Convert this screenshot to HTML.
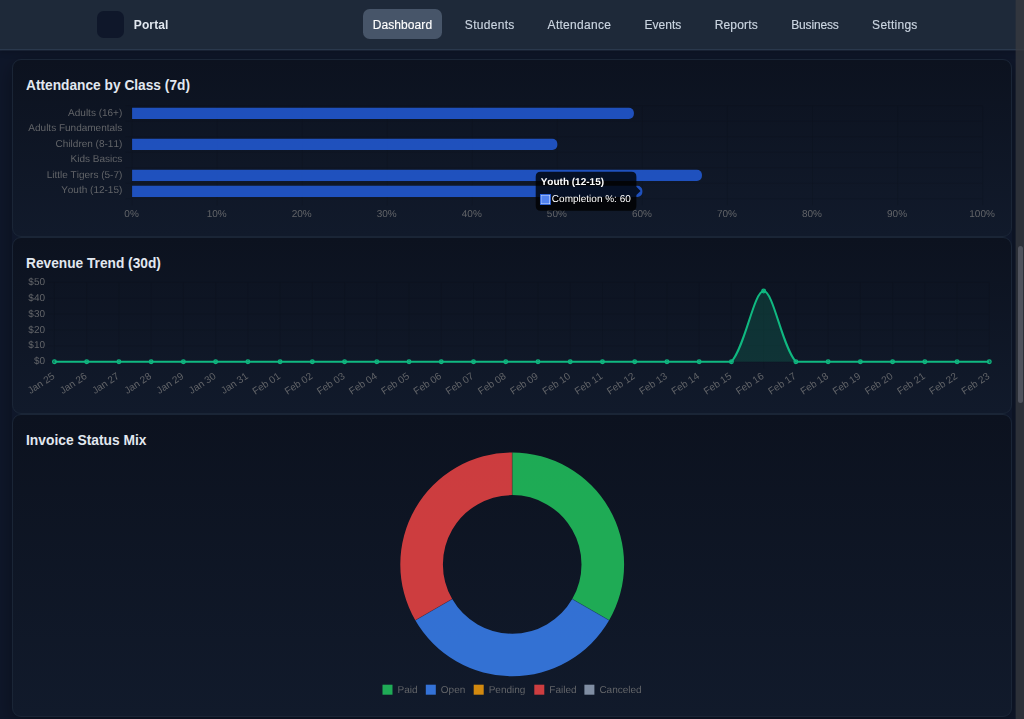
<!DOCTYPE html>
<html lang="en">
<head>
<meta charset="utf-8">
<title>Portal – Dashboard</title>
<style>
*{box-sizing:border-box;margin:0;padding:0}
html,body{width:1024px;height:719px;overflow:hidden;background:#0f172a}
body{position:relative;font-family:"Liberation Sans","DejaVu Sans",sans-serif;color:#e5e7eb}
header{position:absolute;left:0;top:0;width:1024px;height:50px;background:#1e2939;border-bottom:1px solid #2a384c;box-shadow:0 1px 0 rgba(42,56,76,0.4),0 2px 6px rgba(0,0,0,0.22);z-index:2}
.logo{position:absolute;left:97px;top:10.5px;width:27px;height:27px;border-radius:6.7px;background:#0f172a}
.brand{position:absolute;left:133.8px;top:17.5px;font-size:12px;line-height:14px;font-weight:700;color:#e2e8f0;white-space:nowrap;letter-spacing:0.12px}
nav a{position:absolute;top:9px;width:120px;height:30px;line-height:33px;text-align:center;font-size:12px;color:#cbd5e1;white-space:nowrap;text-decoration:none;-webkit-text-stroke:0.15px currentColor}
nav a.on{color:#fff}
nav a.on::before{content:"";position:absolute;left:20.6px;top:0;width:79px;height:30px;border-radius:6.7px;background:#475569;z-index:-1}
nav{position:absolute;left:0;top:0;z-index:0}
.card{position:absolute;left:12px;width:1000px;border:1px solid #1a2536;border-radius:9px;background:linear-gradient(180deg,#0c121f,#111a2b)}
.cards{position:absolute;left:12px;top:59px;width:1000px;height:658px;border-radius:9px;box-shadow:0 6px 20px rgba(0,0,0,0.35)}
.card h3{position:absolute;left:13.1px;top:16px;font-size:15px;line-height:17px;font-weight:700;color:#e2e8f0;white-space:nowrap;transform-origin:0 50%;transform:scaleX(0.915)}
#c1{top:59px;height:178px}
#c2{top:237px;height:177px}
#c3{top:414px;height:303px}
svg.ch{position:absolute;left:0;top:0;width:1024px;height:719px;will-change:transform;text-rendering:geometricPrecision;font-kerning:none;font-family:"Liberation Sans","DejaVu Sans",sans-serif;font-size:10px;fill:#626468}
.sb{position:absolute;right:0;top:0;width:8px;height:719px;background:rgba(58,60,64,0.7);box-shadow:-1px 0 0 rgba(58,60,64,0.25);z-index:3}
.sb i{position:absolute;left:2px;top:246px;width:5px;height:157px;border-radius:2.5px;background:#50535d}
</style>
</head>
<body>
<header>
<div class="logo"></div>
<div class="brand">Portal</div>
<nav><a class="on" style="left:342.45px;letter-spacing:0.1px">Dashboard</a><a style="left:429.75px;letter-spacing:0.3px">Students</a><a style="left:519.39px;letter-spacing:0.28px">Attendance</a><a style="left:602.9px;letter-spacing:0px">Events</a><a style="left:676.35px;letter-spacing:0.2px">Reports</a><a style="left:754.92px;letter-spacing:-0.15px">Business</a><a style="left:834.88px;letter-spacing:0.27px">Settings</a></nav>
</header>
<main>
<div class="cards"></div>
<section class="card" id="c1"><h3>Attendance by Class (7d)</h3></section>
<section class="card" id="c2"><h3 style="transform:scaleX(0.914)">Revenue Trend (30d)</h3></section>
<section class="card" id="c3"><h3 style="transform:scaleX(0.921)">Invoice Status Mix</h3></section>
<svg class="ch" viewBox="0 0 1024 719">
<g id="chart-attendance">
<path d="M132.1 105.7V205.37M217.15 105.7V205.37M302.2 105.7V205.37M387.25 105.7V205.37M472.3 105.7V205.37M557.35 105.7V205.37M642.4 105.7V205.37M727.45 105.7V205.37M812.5 105.7V205.37M897.55 105.7V205.37M982.6 105.7V205.37M125.43 105.7H982.6M125.43 121.2H982.6M125.43 136.7H982.6M125.43 152.2H982.6M125.43 167.7H982.6M125.43 183.2H982.6M125.43 198.7H982.6" fill="none" stroke="#000" stroke-opacity="0.1" stroke-width="0.83"/>
<path d="M132.1 107.87H628.89A5 5 0 0 1 633.89 112.87V114.03A5 5 0 0 1 628.89 119.03H132.1Z" fill="rgba(37,99,235,0.77)"/>
<path d="M132.1 138.87H552.35A5 5 0 0 1 557.35 143.87V145.03A5 5 0 0 1 552.35 150.03H132.1Z" fill="rgba(37,99,235,0.77)"/>
<path d="M132.1 169.87H696.94A5 5 0 0 1 701.94 174.87V176.03A5 5 0 0 1 696.94 181.03H132.1Z" fill="rgba(37,99,235,0.77)"/>
<path d="M132.1 185.87H637.4A5 5 0 0 1 642.4 190.87V192.03A5 5 0 0 1 637.4 197.03H132.1Z" fill="rgba(37,99,235,0.77)"/>
<text x="122.3" y="115.75" text-anchor="end">Adults (16+)</text>
<text x="122.3" y="131.25" text-anchor="end">Adults Fundamentals</text>
<text x="122.3" y="146.75" text-anchor="end">Children (8-11)</text>
<text x="122.3" y="162.25" text-anchor="end">Kids Basics</text>
<text x="122.3" y="177.75" text-anchor="end">Little Tigers (5-7)</text>
<text x="122.3" y="193.25" text-anchor="end">Youth (12-15)</text>
<text x="131.6" y="217.32" text-anchor="middle">0%</text>
<text x="216.65" y="217.32" text-anchor="middle">10%</text>
<text x="301.7" y="217.32" text-anchor="middle">20%</text>
<text x="386.75" y="217.32" text-anchor="middle">30%</text>
<text x="471.8" y="217.32" text-anchor="middle">40%</text>
<text x="556.85" y="217.32" text-anchor="middle">50%</text>
<text x="641.9" y="217.32" text-anchor="middle">60%</text>
<text x="726.95" y="217.32" text-anchor="middle">70%</text>
<text x="812" y="217.32" text-anchor="middle">80%</text>
<text x="897.05" y="217.32" text-anchor="middle">90%</text>
<text x="982.1" y="217.32" text-anchor="middle">100%</text>
<path d="M540.7 171.8H631.4Q636.4 171.8 636.4 176.8V186.78L640.57 190.95L636.4 195.12V205.8Q636.4 210.8 631.4 210.8H540.7Q535.7 210.8 535.7 205.8V176.8Q535.7 171.8 540.7 171.8Z" fill="rgba(0,0,0,0.8)"/>
<text x="540.7" y="185" fill="#fff" font-weight="700">Youth (12-15)</text>
<rect x="540.4" y="194.5" width="10" height="10" fill="#fff" stroke="rgb(37,99,235)" stroke-width="0.83"/>
<rect x="541.23" y="195.33" width="8.33" height="8.33" fill="rgba(37,99,235,0.8)"/>
<text x="551.87" y="202" fill="#fff">Completion %: 60</text>
</g>
<g id="chart-revenue">
<path d="M54.45 282.3V368.42M86.69 282.3V368.42M118.92 282.3V368.42M151.16 282.3V368.42M183.39 282.3V368.42M215.63 282.3V368.42M247.87 282.3V368.42M280.1 282.3V368.42M312.34 282.3V368.42M344.58 282.3V368.42M376.81 282.3V368.42M409.05 282.3V368.42M441.28 282.3V368.42M473.52 282.3V368.42M505.76 282.3V368.42M537.99 282.3V368.42M570.23 282.3V368.42M602.47 282.3V368.42M634.7 282.3V368.42M666.94 282.3V368.42M699.17 282.3V368.42M731.41 282.3V368.42M763.65 282.3V368.42M795.88 282.3V368.42M828.12 282.3V368.42M860.36 282.3V368.42M892.59 282.3V368.42M924.83 282.3V368.42M957.06 282.3V368.42M989.3 282.3V368.42M47.78 361.75H989.3M47.78 345.86H989.3M47.78 329.97H989.3M47.78 314.08H989.3M47.78 298.19H989.3M47.78 282.3H989.3" fill="none" stroke="#000" stroke-opacity="0.1" stroke-width="0.83"/>
<path d="M54.45 361.75H86.69H118.92H151.16H183.39H215.63H247.87H280.1H312.34H344.58H376.81H409.05H441.28H473.52H505.76H537.99H570.23H602.47H634.7H666.94H699.17H731.41C745.08 346.74 753.98 290.96 763.65 290.96C773.32 290.96 782.21 346.74 795.88 361.75H828.12H860.36H892.59H924.83H957.06H989.3V361.75H54.45Z" fill="rgba(16,185,129,0.18)"/>
<path d="M54.45 361.75H86.69H118.92H151.16H183.39H215.63H247.87H280.1H312.34H344.58H376.81H409.05H441.28H473.52H505.76H537.99H570.23H602.47H634.7H666.94H699.17H731.41C745.08 346.74 753.98 290.96 763.65 290.96C773.32 290.96 782.21 346.74 795.88 361.75H828.12H860.36H892.59H924.83H957.06H989.3" fill="none" stroke="#10b981" stroke-width="2" stroke-linejoin="round"/>
<g fill="rgba(16,185,129,0.4)" stroke="#10b981" stroke-width="1.25"><circle cx="54.45" cy="361.75" r="1.85"/><circle cx="86.69" cy="361.75" r="1.85"/><circle cx="118.92" cy="361.75" r="1.85"/><circle cx="151.16" cy="361.75" r="1.85"/><circle cx="183.39" cy="361.75" r="1.85"/><circle cx="215.63" cy="361.75" r="1.85"/><circle cx="247.87" cy="361.75" r="1.85"/><circle cx="280.1" cy="361.75" r="1.85"/><circle cx="312.34" cy="361.75" r="1.85"/><circle cx="344.58" cy="361.75" r="1.85"/><circle cx="376.81" cy="361.75" r="1.85"/><circle cx="409.05" cy="361.75" r="1.85"/><circle cx="441.28" cy="361.75" r="1.85"/><circle cx="473.52" cy="361.75" r="1.85"/><circle cx="505.76" cy="361.75" r="1.85"/><circle cx="537.99" cy="361.75" r="1.85"/><circle cx="570.23" cy="361.75" r="1.85"/><circle cx="602.47" cy="361.75" r="1.85"/><circle cx="634.7" cy="361.75" r="1.85"/><circle cx="666.94" cy="361.75" r="1.85"/><circle cx="699.17" cy="361.75" r="1.85"/><circle cx="731.41" cy="361.75" r="1.85"/><circle cx="763.65" cy="290.96" r="1.85"/><circle cx="795.88" cy="361.75" r="1.85"/><circle cx="828.12" cy="361.75" r="1.85"/><circle cx="860.36" cy="361.75" r="1.85"/><circle cx="892.59" cy="361.75" r="1.85"/><circle cx="924.83" cy="361.75" r="1.85"/><circle cx="957.06" cy="361.75" r="1.85"/><circle cx="989.3" cy="361.75" r="1.85"/></g>
<text x="45.05" y="364.35" text-anchor="end">$0</text>
<text x="45.05" y="348.46" text-anchor="end">$10</text>
<text x="45.05" y="332.57" text-anchor="end">$20</text>
<text x="45.05" y="316.68" text-anchor="end">$30</text>
<text x="45.05" y="300.79" text-anchor="end">$40</text>
<text x="45.05" y="284.9" text-anchor="end">$50</text>
<text transform="translate(50.42 370.22) rotate(-33.7)" x="0" y="9" text-anchor="end">Jan 25</text>
<text transform="translate(82.66 370.22) rotate(-33.7)" x="0" y="9" text-anchor="end">Jan 26</text>
<text transform="translate(114.89 370.22) rotate(-33.7)" x="0" y="9" text-anchor="end">Jan 27</text>
<text transform="translate(147.13 370.22) rotate(-33.7)" x="0" y="9" text-anchor="end">Jan 28</text>
<text transform="translate(179.36 370.22) rotate(-33.7)" x="0" y="9" text-anchor="end">Jan 29</text>
<text transform="translate(211.6 370.22) rotate(-33.7)" x="0" y="9" text-anchor="end">Jan 30</text>
<text transform="translate(243.84 370.22) rotate(-33.7)" x="0" y="9" text-anchor="end">Jan 31</text>
<text transform="translate(276.07 370.22) rotate(-33.7)" x="0" y="9" text-anchor="end">Feb 01</text>
<text transform="translate(308.31 370.22) rotate(-33.7)" x="0" y="9" text-anchor="end">Feb 02</text>
<text transform="translate(340.55 370.22) rotate(-33.7)" x="0" y="9" text-anchor="end">Feb 03</text>
<text transform="translate(372.78 370.22) rotate(-33.7)" x="0" y="9" text-anchor="end">Feb 04</text>
<text transform="translate(405.02 370.22) rotate(-33.7)" x="0" y="9" text-anchor="end">Feb 05</text>
<text transform="translate(437.25 370.22) rotate(-33.7)" x="0" y="9" text-anchor="end">Feb 06</text>
<text transform="translate(469.49 370.22) rotate(-33.7)" x="0" y="9" text-anchor="end">Feb 07</text>
<text transform="translate(501.73 370.22) rotate(-33.7)" x="0" y="9" text-anchor="end">Feb 08</text>
<text transform="translate(533.96 370.22) rotate(-33.7)" x="0" y="9" text-anchor="end">Feb 09</text>
<text transform="translate(566.2 370.22) rotate(-33.7)" x="0" y="9" text-anchor="end">Feb 10</text>
<text transform="translate(598.44 370.22) rotate(-33.7)" x="0" y="9" text-anchor="end">Feb 11</text>
<text transform="translate(630.67 370.22) rotate(-33.7)" x="0" y="9" text-anchor="end">Feb 12</text>
<text transform="translate(662.91 370.22) rotate(-33.7)" x="0" y="9" text-anchor="end">Feb 13</text>
<text transform="translate(695.14 370.22) rotate(-33.7)" x="0" y="9" text-anchor="end">Feb 14</text>
<text transform="translate(727.38 370.22) rotate(-33.7)" x="0" y="9" text-anchor="end">Feb 15</text>
<text transform="translate(759.62 370.22) rotate(-33.7)" x="0" y="9" text-anchor="end">Feb 16</text>
<text transform="translate(791.85 370.22) rotate(-33.7)" x="0" y="9" text-anchor="end">Feb 17</text>
<text transform="translate(824.09 370.22) rotate(-33.7)" x="0" y="9" text-anchor="end">Feb 18</text>
<text transform="translate(856.33 370.22) rotate(-33.7)" x="0" y="9" text-anchor="end">Feb 19</text>
<text transform="translate(888.56 370.22) rotate(-33.7)" x="0" y="9" text-anchor="end">Feb 20</text>
<text transform="translate(920.8 370.22) rotate(-33.7)" x="0" y="9" text-anchor="end">Feb 21</text>
<text transform="translate(953.03 370.22) rotate(-33.7)" x="0" y="9" text-anchor="end">Feb 22</text>
<text transform="translate(985.27 370.22) rotate(-33.7)" x="0" y="9" text-anchor="end">Feb 23</text>
</g>
<g id="chart-invoices">
<path d="M512.2 452.5A111.9 111.9 0 0 1 609.11 620.35L572.22 599.05A69.3 69.3 0 0 0 512.2 495.1Z" fill="rgba(34,197,94,0.85)"/>
<path d="M609.11 620.35A111.9 111.9 0 0 1 415.29 620.35L452.18 599.05A69.3 69.3 0 0 0 572.22 599.05Z" fill="rgba(59,130,246,0.835)"/>
<path d="M415.29 620.35A111.9 111.9 0 0 1 512.2 452.5L512.2 495.1A69.3 69.3 0 0 0 452.18 599.05Z" fill="rgba(239,68,68,0.85)"/>
<path d="M512.2 495.1L512.2 452.5M572.22 599.05L609.11 620.35M452.18 599.05L415.29 620.35" fill="none" stroke="#0f172a" stroke-opacity="0.3" stroke-width="0.83"/>
<rect x="382.5" y="684.7" width="10" height="10" fill="rgba(34,197,94,0.85)"/>
<text x="397.5" y="692.7">Paid</text>
<rect x="425.8" y="684.7" width="10" height="10" fill="rgba(59,130,246,0.85)"/>
<text x="440.8" y="692.7">Open</text>
<rect x="473.7" y="684.7" width="10" height="10" fill="rgba(245,158,11,0.85)"/>
<text x="488.7" y="692.7">Pending</text>
<rect x="534.3" y="684.7" width="10" height="10" fill="rgba(239,68,68,0.85)"/>
<text x="549.3" y="692.7">Failed</text>
<rect x="584.4" y="684.7" width="10" height="10" fill="rgba(148,163,184,0.85)"/>
<text x="599.4" y="692.7">Canceled</text>
</g>
</svg>
</main>
<div class="sb"><i></i></div>
</body>
</html>
